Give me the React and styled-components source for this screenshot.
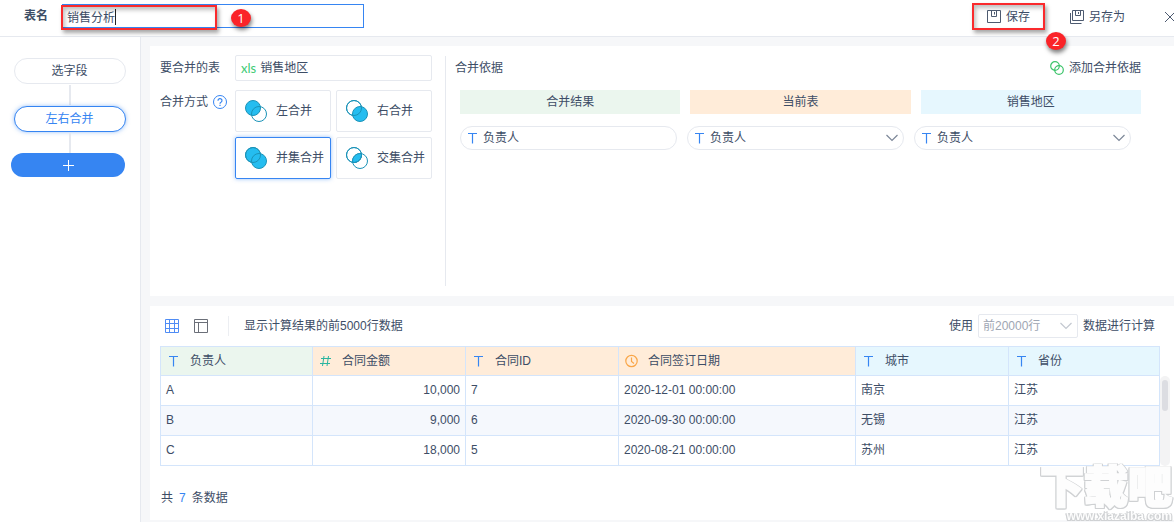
import { useState } from "react";
import styled, { createGlobalStyle, css } from "styled-components";

const GlobalStyle = createGlobalStyle`
  * {
    box-sizing: border-box;
  }
  body {
    margin: 0;
    background-color: #f6f7f9;
    color: #3d4d66;
    overflow: hidden;
  }
  body, button, input, select {
    font-family: "Liberation Sans", "Noto Sans CJK SC", sans-serif;
    font-size: 12px;
    line-height: 18px;
  }
  button, input, select {
    color: inherit;
    margin: 0;
  }
`;

const Page = styled.div`
  position: relative;
  min-height: 100vh;
  display: flex;
  flex-direction: column;
`;
const Header = styled.header`
  height: 37px;
  display: flex;
  align-items: flex-start;
  padding: 3px 0 0 24px;
  background-color: white;
  border-bottom: 1px solid #e6e9ef;
`;
const NameLabel = styled.label`
  width: 38px;
  padding-top: 4px;
  font-weight: bold;
`;
const NameField = styled.div`
  position: relative;
  padding-top: 1px;
`;
const NameInput = styled.input`
  display: block;
  width: 302px;
  height: 24px;
  padding: 0 4px;
  border: 1px solid #3685f2;
  outline: none;
  background-color: white;
`;
const Caret = styled.span`
  position: absolute;
  left: 53px;
  top: 6px;
  width: 1px;
  height: 16px;
  background-color: #222;
`;
const marked = css`
  border: 2px solid #fa2a2d;
  box-shadow: 2px 3px 4px rgba(0, 0, 0, 0.35), inset 2px 3px 4px rgba(0, 0, 0, 0.25);
`;
const NameMark = styled.span`
  position: absolute;
  left: -1px;
  top: 2px;
  width: 156px;
  height: 25px;
  ${marked}
`;
const StepBadge = styled.span`
  position: absolute;
  left: ${(p) => p.$left};
  top: ${(p) => p.$top};
  z-index: 2;
  width: 20px;
  height: 18px;
  border-radius: 50%;
  background-color: #fa2328;
  color: white;
  font-family: "Open Sans", sans-serif;
  font-size: 13px;
  line-height: 18px;
  text-align: center;
  box-shadow: 1px 3px 4px rgba(0, 0, 0, 0.5);
`;
const Actions = styled.div`
  margin-left: auto;
  display: flex;
  align-items: flex-start;
`;
const ActionButton = styled.button`
  position: relative;
  height: 27px;
  display: flex;
  align-items: center;
  gap: 5px;
  padding: 0 13px;
  border: 2px solid transparent;
  background: none;
  ${(p) => p.$marked && marked}
`;
const CloseButton = styled.button`
  width: 10px;
  height: 27px;
  margin-left: 24px;
  padding: 0;
  border: 0;
  background: none;
  display: flex;
  align-items: center;
  overflow: hidden;
  svg {
    flex: none;
  }
`;
const SaveAsWrap = styled.div`
  margin-left: 10px;
`;

const Body = styled.div`
  flex: 1;
  display: flex;
`;
const Sidebar = styled.nav`
  flex: none;
  width: 141px;
  padding: 21px 15px 0 11px;
  background-color: white;
  border-right: 1px solid #e6e9ef;
`;
const Steps = styled.div`
  display: flex;
  flex-direction: column;
  align-items: center;
  padding-left: 3px;
  margin-bottom: -1px;
`;
const Step = styled.button`
  width: 112px;
  height: 26px;
  padding: 0;
  border: 1px solid ${(p) => (p.$active ? "#3685f2" : "#e6e9ef")};
  border-radius: 13px;
  background-color: white;
  color: ${(p) => (p.$active ? "#3685f2" : "inherit")};
  box-shadow: ${(p) => (p.$active ? "0 0 4px rgba(54, 133, 242, 0.5)" : "none")};
`;
const Connector = styled.span`
  width: 2px;
  height: 20px;
  margin: 1px 0;
  background-color: #e6e9ef;
`;
const AddStep = styled.button`
  width: 100%;
  height: 24px;
  display: flex;
  align-items: center;
  justify-content: center;
  border: 0;
  border-radius: 12px;
  background-color: #3685f2;
`;
const Main = styled.main`
  flex: 1;
  min-width: 0;
  display: flex;
  flex-direction: column;
  gap: 10px;
  padding: 9px 0 2px 9px;
`;

const Config = styled.section`
  display: flex;
  height: 250px;
  padding: 10px 33px 10px 10px;
  background-color: white;
`;
const Source = styled.div`
  flex: none;
  width: 286px;
  padding-right: 13px;
  border-right: 1px solid #e6e9ef;
`;
const FormRow = styled.div`
  display: flex;
  margin-bottom: 9px;
`;
const FormLabel = styled.div`
  width: 75px;
  padding-top: 3px;
  display: flex;
  align-items: flex-start;
  gap: 5px;
  svg {
    margin-top: 2px;
  }
`;
const SourceTable = styled.div`
  flex: 1;
  height: 26px;
  margin-top: -1px;
  padding: 0 5px;
  display: flex;
  align-items: center;
  gap: 4px;
  border: 1px solid #e6e9ef;
  border-radius: 2px;
`;
const FileType = styled.span`
  color: #3dcb74;
  font-family: Lato, sans-serif;
  font-size: 13px;
`;
const Modes = styled.div`
  flex: 1;
  display: grid;
  grid-template-columns: 1fr 1fr;
  gap: 5px;
`;
const Mode = styled.label`
  position: relative;
  height: 42px;
  display: flex;
  align-items: center;
  gap: 8px;
  padding-left: 8px;
  border: 1px solid #e6e9ef;
  border-radius: 2px;
  white-space: nowrap;
  &:has(input:checked) {
    border-color: #3685f2;
    box-shadow: 0 0 4px rgba(54, 133, 242, 0.5);
  }
  input {
    position: absolute;
    opacity: 0;
  }
`;
const Basis = styled.div`
  flex: 1;
  padding-left: 9px;
`;
const BasisTop = styled.div`
  height: 34px;
  display: flex;
  justify-content: space-between;
  align-items: flex-start;
  padding-top: 3px;
`;
const LinkButton = styled.button`
  display: flex;
  align-items: center;
  gap: 5px;
  padding: 0;
  border: 0;
  background: none;
`;
const BasisRow = styled.div`
  display: grid;
  grid-template-columns: 1fr 1fr 1fr;
  gap: 10px;
  padding: 0 ${(p) => (p.$inset ? "10px" : "0")} 0 5px;
  margin-bottom: 12px;
`;
const BasisHead = styled.div`
  height: 24px;
  line-height: 24px;
  text-align: center;
  background-color: ${(p) => p.$color};
`;
const FieldPill = styled.label`
  position: relative;
  display: flex;
  align-items: center;
  height: 24px;
  padding: 0 4px;
  border: 1px solid #e6e9ef;
  border-radius: 12px;
  gap: 2px;
  input, select {
    flex: 1;
    min-width: 0;
    padding: 0;
    border: 0;
    background: none;
    outline: none;
    appearance: none;
  }
  svg {
    flex: none;
  }
`;

const Preview = styled.section`
  flex: 1;
  padding: 8px 4px 13px 10px;
  background-color: white;
`;
const Toolbar = styled.div`
  height: 32px;
  display: flex;
  align-items: flex-start;
`;
const Tool = styled.button`
  width: 24px;
  height: 24px;
  margin-right: 5px;
  padding: 0;
  border: 0;
  background: none;
  display: flex;
  align-items: center;
  justify-content: center;
`;
const ToolHint = styled.div`
  height: 20px;
  line-height: 20px;
  margin: 2px 0 0 10px;
  padding-left: 15px;
  border-left: 1px solid #eceef2;
`;
const Limit = styled.label`
  margin-left: auto;
  padding-right: 15px;
  display: flex;
  align-items: center;
  gap: 5px;
`;
const LimitBox = styled.span`
  display: flex;
  align-items: center;
  width: 100px;
  height: 24px;
  padding: 0 4px;
  border: 1px solid #e6e9ef;
  border-radius: 2px;
  color: #9ea6b3;
  select {
    flex: 1;
    min-width: 0;
    padding: 0;
    border: 0;
    background: none;
    appearance: none;
  }
`;
const TableArea = styled.div`
  display: flex;
`;
const Table = styled.table`
  flex: 1;
  min-width: 0;
  table-layout: fixed;
  border-collapse: collapse;
  th, td {
    padding: 0 5px;
    border: 1px solid #d4e5fb;
    text-align: left;
    font-weight: normal;
  }
  th {
    height: 29px;
  }
  td {
    height: 30px;
    padding-bottom: 2px;
  }
  tbody tr:nth-child(even) {
    background-color: #f5f8fd;
  }
`;
const Th = styled.th`
  background-color: ${(p) => p.$color};
  div {
    display: flex;
    align-items: center;
    gap: 8px;
  }
`;
const Td = styled.td`
  && {
    text-align: ${(p) => (p.$number ? "right" : "left")};
  }
`;
const ScrollTrack = styled.div`
  width: 10px;
  margin-top: 30px;
  padding: 4px 2px;
  border-radius: 5px;
  background-color: #f3f3f4;
`;
const ScrollThumb = styled.div`
  height: 31px;
  border-radius: 3px;
  background-color: #dcdde2;
`;
const Total = styled.div`
  margin: 23px 0 0 1px;
  span {
    margin: 0 6px;
    color: #3685f2;
  }
`;
const Watermark = styled.div`
  position: absolute;
  right: 2px;
  bottom: 0;
  display: flex;
  flex-direction: column;
  align-items: flex-end;
  color: #fdfdfd;
  font-weight: 900;
  filter: drop-shadow(1px 0 0 #cfd1d3) drop-shadow(-1px 0 0 #cfd1d3) drop-shadow(0 1px 0 #cfd1d3);
  pointer-events: none;
`;
const WatermarkName = styled.div`
  font-size: 44px;
  line-height: 44px;
  -webkit-text-stroke: 2px #fdfdfd;
`;
const WatermarkUrl = styled.div`
  font-size: 12px;
  line-height: 12px;
`;

const GREEN = "#ebf6ee";
const ORANGE = "#ffecd9";
const BLUE = "#e6f7fe";

const modes = [
  { id: "left", name: "左合并" },
  { id: "right", name: "右合并" },
  { id: "union", name: "并集合并" },
  { id: "inner", name: "交集合并" },
];

const columns = [
  { name: "负责人", type: "text", color: GREEN, width: 152 },
  { name: "合同金额", type: "number", color: ORANGE, width: 153 },
  { name: "合同ID", type: "text", color: ORANGE, width: 153 },
  { name: "合同签订日期", type: "date", color: ORANGE, width: 237 },
  { name: "城市", type: "text", color: BLUE, width: 153 },
  { name: "省份", type: "text", color: BLUE },
];

const rows = [
  ["A", "10,000", "7", "2020-12-01 00:00:00", "南京", "江苏"],
  ["B", "9,000", "6", "2020-09-30 00:00:00", "无锡", "江苏"],
  ["C", "18,000", "5", "2020-08-21 00:00:00", "苏州", "江苏"],
];

function TypeIcon({ type }) {
  if (type === "number") {
    return (
      <svg width="16" height="16" fill="none" stroke="#2bb5a0">
        <path d="M3 5.500h10M2 10.500h10M6 3L4.500 13M10.500 3L9 13" />
      </svg>
    );
  }
  if (type === "date") {
    return (
      <svg width="16" height="16" fill="none" stroke="#f9a648" strokeWidth="1.2">
        <circle cx="7.500" cy="8" r="5.700" />
        <path d="M7.500 4.500V8.500l2.500 2" />
      </svg>
    );
  }
  return (
    <svg width="16" height="16" fill="none" stroke="#3685f2" strokeWidth="1.200">
      <path d="M3 3.500h9M7.500 3.500v10" />
    </svg>
  );
}

function Chevron({ color = "#7c8798" }) {
  return (
    <svg width="14" height="8" fill="none" stroke={color} strokeWidth="1.200">
      <path d="M1.500 1L7 6.500L12.500 1" />
    </svg>
  );
}

function MergeIcon({ mode }) {
  const fill = "#25bdf0";
  const left = mode === "left" || mode === "union" ? fill : "none";
  const right = mode === "right" || mode === "union" ? fill : "none";
  return (
    <svg width="24" height="24" stroke="#1b93b8" strokeWidth="1">
      <circle cx="9" cy="9" r="7.500" fill={left} />
      <circle cx="15" cy="15" r="7.500" fill={right} />
      {mode === "inner" && (
        <path d="M7.700 16.400A7.500 7.500 0 0 1 16.400 7.700A7.500 7.500 0 0 1 7.700 16.400Z" fill={fill} />
      )}
      {mode !== "left" && <circle cx="9" cy="9" r="7.500" fill="none" />}
    </svg>
  );
}

export default function App() {
  const [name, setName] = useState("销售分析");
  const [mode, setMode] = useState("union");
  const [result, setResult] = useState("负责人");

  return (
    <Page>
      <GlobalStyle />
      <Header>
        <NameLabel htmlFor="tableName">表名</NameLabel>
        <NameField>
          <NameInput id="tableName" value={name} onChange={(e) => setName(e.target.value)} />
          <Caret />
          <NameMark />
          <StepBadge $left="169px" $top="6px">1</StepBadge>
        </NameField>
        <Actions>
          <ActionButton $marked>
            <svg width="14" height="14" fill="none" stroke="#4d5a70">
              <path d="M.5 .5h13v12h-13zM4.500 .5v6h5v-6M7.500 2v2.500" />
            </svg>
            保存
            <StepBadge $left="72px" $top="27px">2</StepBadge>
          </ActionButton>
          <SaveAsWrap>
            <ActionButton>
              <svg width="14" height="14" fill="none" stroke="#4d5a70">
                <path d="M2.500 .5h11v10h-11zM5.500 .5v5h5v-5M8.500 2v2M.5 3v10.500h11" />
              </svg>
              另存为
            </ActionButton>
          </SaveAsWrap>
          <CloseButton aria-label="关闭">
            <svg width="12" height="12" fill="none" stroke="#4d5a70">
              <path d="M1 1l10 10M11 1L1 11" />
            </svg>
          </CloseButton>
        </Actions>
      </Header>
      <Body>
        <Sidebar>
          <Steps>
            <Step>选字段</Step>
            <Connector />
            <Step $active>左右合并</Step>
            <Connector />
          </Steps>
          <AddStep aria-label="添加">
            <svg width="11" height="11" stroke="white">
              <path d="M5.500 0v11M0 5.500h11" />
            </svg>
          </AddStep>
        </Sidebar>
        <Main>
          <Config>
            <Source>
              <FormRow>
                <FormLabel>要合并的表</FormLabel>
                <SourceTable>
                  <FileType>xls</FileType>
                  销售地区
                </SourceTable>
              </FormRow>
              <FormRow>
                <FormLabel>
                  合并方式
                  <svg width="14" height="14" fill="none" stroke="#3685f2">
                    <circle cx="7" cy="7" r="6.500" />
                    <path d="M5 5.700a2 2 0 1 1 3 1.600q-1 .5-1 1.400M7 9.800v1.200" strokeWidth="1.200" />
                  </svg>
                </FormLabel>
                <Modes>
                  {modes.map((m) => (
                    <Mode key={m.id}>
                      <input
                        type="radio"
                        name="mode"
                        checked={mode === m.id}
                        onChange={() => setMode(m.id)}
                      />
                      <MergeIcon mode={m.id} />
                      {m.name}
                    </Mode>
                  ))}
                </Modes>
              </FormRow>
            </Source>
            <Basis>
              <BasisTop>
                <span>合并依据</span>
                <LinkButton>
                  <svg width="14" height="14" fill="none" stroke="#3dc46b" strokeWidth="1.200">
                    <circle cx="5" cy="5" r="4.300" />
                    <circle cx="9" cy="9" r="4.300" />
                  </svg>
                  添加合并依据
                </LinkButton>
              </BasisTop>
              <BasisRow>
                <BasisHead $color={GREEN}>合并结果</BasisHead>
                <BasisHead $color={ORANGE}>当前表</BasisHead>
                <BasisHead $color={BLUE}>销售地区</BasisHead>
              </BasisRow>
              <BasisRow $inset>
                <FieldPill>
                  <TypeIcon />
                  <input
                    aria-label="合并结果"
                    value={result}
                    onChange={(e) => setResult(e.target.value)}
                  />
                </FieldPill>
                <FieldPill>
                  <TypeIcon />
                  <select aria-label="当前表">
                    <option>负责人</option>
                  </select>
                  <Chevron />
                </FieldPill>
                <FieldPill>
                  <TypeIcon />
                  <select aria-label="销售地区">
                    <option>负责人</option>
                  </select>
                  <Chevron />
                </FieldPill>
              </BasisRow>
            </Basis>
          </Config>
          <Preview>
            <Toolbar>
              <Tool aria-label="表格">
                <svg width="14" height="14" fill="none" stroke="#4f8cf5">
                  <path d="M.5 .5h13v13h-13zM.5 4.500h13M.5 9.500h13M4.500 .5v13M9.500 .5v13" />
                </svg>
              </Tool>
              <Tool aria-label="字段">
                <svg width="14" height="14" fill="none" stroke="#6b6f78">
                  <path d="M.5 .5h13v13h-13zM.5 3.500h13M4.500 3.500v10" />
                </svg>
              </Tool>
              <ToolHint>显示计算结果的前5000行数据</ToolHint>
              <Limit>
                使用
                <LimitBox>
                  <select>
                    <option>前20000行</option>
                  </select>
                  <Chevron color="#c3c8d0" />
                </LimitBox>
                数据进行计算
              </Limit>
            </Toolbar>
            <TableArea>
              <Table>
                <colgroup>
                  {columns.map((c) => (
                    <col key={c.name} width={c.width} />
                  ))}
                </colgroup>
                <thead>
                  <tr>
                    {columns.map((c) => (
                      <Th key={c.name} $color={c.color}>
                        <div>
                          <TypeIcon type={c.type} />
                          {c.name}
                        </div>
                      </Th>
                    ))}
                  </tr>
                </thead>
                <tbody>
                  {rows.map((row) => (
                    <tr key={row[0]}>
                      {row.map((cell, i) => (
                        <Td key={i} $number={columns[i].type === "number"}>
                          {cell}
                        </Td>
                      ))}
                    </tr>
                  ))}
                </tbody>
              </Table>
              <ScrollTrack>
                <ScrollThumb />
              </ScrollTrack>
            </TableArea>
            <Total>
              共<span>7</span>条数据
            </Total>
          </Preview>
        </Main>
      </Body>
      <Watermark>
        <WatermarkName>下载吧</WatermarkName>
        <WatermarkUrl>www.xiazaiba.com</WatermarkUrl>
      </Watermark>
    </Page>
  );
}
